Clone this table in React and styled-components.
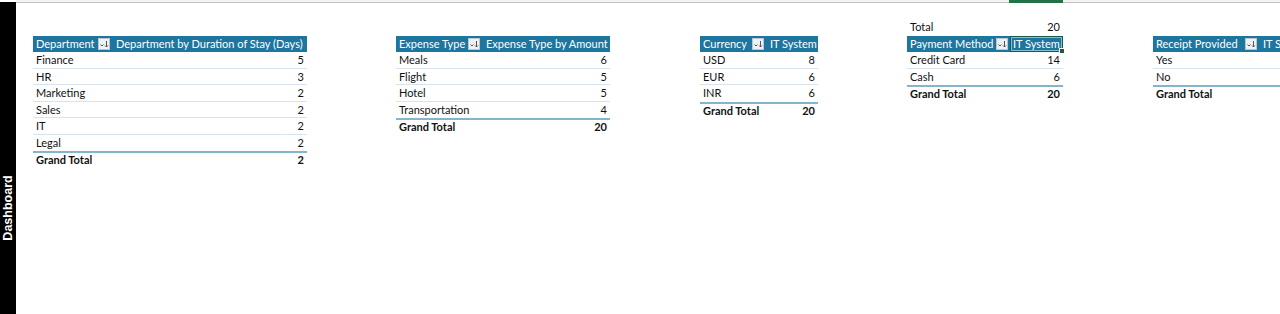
import React from "react";
import styled, { createGlobalStyle } from "styled-components";

const GlobalStyle = createGlobalStyle`
  html, body {
    margin: 0;
    padding: 0;
    background: #ffffff;
  }
  body {
    font-family: Lato, "Noto Sans", "Liberation Sans", sans-serif;
    color: #111;
  }
`;

const Page = styled.div`
  display: flex;
  height: 314px;
  overflow: hidden;
  background: #fff;
`;

const Sidebar = styled.div`
  width: 16px;
  flex: none;
  background: #000;
  margin-top: 2px;
  display: flex;
  align-items: center;
  justify-content: center;
  padding-top: 100px;
  box-sizing: border-box;
  span {
    transform: rotate(-90deg);
    color: #fff;
    font-family: "Liberation Sans", Arial, sans-serif;
    font-weight: 700;
    font-size: 12.5px;
    white-space: nowrap;
  }
`;

const Sheet = styled.div`
  flex: 1;
  display: flex;
  flex-direction: column;
  min-width: 0;
`;

const ColumnBar = styled.div`
  height: 2px;
  border-bottom: 1px solid #c4c4c4;
  background: #f3f3f3;
  position: relative;
  span {
    position: absolute;
    left: 993px;
    width: 54px;
    top: 0;
    height: 3px;
    background: #217346;
  }
`;

const Canvas = styled.div`
  display: flex;
  align-items: flex-start;
  padding-top: 16px;
  padding-left: 17px;
  overflow: hidden;
`;

const Pivot = styled.div`
  flex: none;
  margin-left: ${(p) => p.$gap || 0}px;
  display: grid;
  grid-template-columns: ${(p) => p.$cols};
  font-size: 11px;
  padding-top: ${(p) => (p.$pre ? 0 : 16.5)}px;
`;

const Cell = styled.div`
  height: 16.5px;
  line-height: 16.5px;
  padding: 0 3px;
  white-space: nowrap;
  overflow: hidden;
  box-sizing: border-box;
  text-align: ${(p) => (p.$num ? "right" : "left")};
  border-bottom: 1px solid ${(p) => (p.$last ? "transparent" : "#d7e4ed")};
`;

const PreCell = styled(Cell)`
  border-bottom: none;
`;

const HeadCell = styled.div`
  height: 16px;
  line-height: 16px;
  background: #1d76a0;
  color: #fff;
  padding: 0 3px;
  white-space: nowrap;
  overflow: hidden;
  box-sizing: border-box;
  display: flex;
  align-items: center;
  justify-content: ${(p) => (p.$filter ? "space-between" : "flex-start")};
  margin-bottom: 0.5px;
  position: relative;
  ${(p) =>
    p.$selected &&
    `
    overflow: visible;
    box-shadow: inset 0 0 0 1px #1a5848, inset 0 0 0 2px #7fc3cf;
    &::after {
      content: "";
      position: absolute;
      right: -2px;
      bottom: -2px;
      width: 4px;
      height: 4px;
      background: #1a5848;
      border: 1px solid #fff;
    }
  `}
`;

const TotalCell = styled(Cell)`
  font-weight: 700;
  border-bottom: none;
  border-top: 2px solid #86b4ca;
  line-height: 14.5px;
`;

const FilterBtn = styled.span`
  width: 12px;
  height: 12px;
  flex: none;
  background: #eef2f5;
  border: 1px solid #b9c6cf;
  box-sizing: border-box;
  display: flex;
  align-items: center;
  justify-content: center;
  margin-left: 3px;
`;

const FilterIcon = () => (
  <FilterBtn>
    <svg width="10" height="10" viewBox="0 0 10 10">
      <path d="M1.5 5.5 L3 7 L4.5 5.5" fill="none" stroke="#555" strokeWidth="1" />
      <path d="M7.5 2 V8" stroke="#555" strokeWidth="1" />
      <path d="M6 6.5 L7.5 8 L9 6.5" fill="none" stroke="#555" strokeWidth="1" />
    </svg>
  </FilterBtn>
);

const tables = [
  {
    gap: 0,
    cols: "80px 194px",
    head: ["Department", "Department by Duration of Stay (Days)"],
    rows: [
      ["Finance", 5],
      ["HR", 3],
      ["Marketing", 2],
      ["Sales", 2],
      ["IT", 2],
      ["Legal", 2],
    ],
    total: 2,
  },
  {
    gap: 89,
    cols: "87px 127px",
    head: ["Expense Type", "Expense Type by Amount"],
    rows: [
      ["Meals", 6],
      ["Flight", 5],
      ["Hotel", 5],
      ["Transportation", 4],
    ],
    total: 20,
  },
  {
    gap: 90,
    cols: "67px 51px",
    head: ["Currency", "IT System"],
    rows: [
      ["USD", 8],
      ["EUR", 6],
      ["INR", 6],
    ],
    total: 20,
  },
  {
    gap: 89,
    cols: "103px 53px",
    pre: ["Total", 20],
    selected: true,
    head: ["Payment Method", "IT System"],
    rows: [
      ["Credit Card", 14],
      ["Cash", 6],
    ],
    total: 20,
  },
  {
    gap: 90,
    cols: "107px 60px",
    head: ["Receipt Provided", "IT System"],
    rows: [
      ["Yes", ""],
      ["No", ""],
    ],
    total: "",
  },
];

export default function App() {
  return (
    <>
      <GlobalStyle />
      <Page>
        <Sidebar>
          <span>Dashboard</span>
        </Sidebar>
        <Sheet>
          <ColumnBar>
            <span />
          </ColumnBar>
          <Canvas>
            {tables.map((t, i) => (
              <Pivot key={i} $gap={t.gap} $cols={t.cols} $pre={!!t.pre}>
                {t.pre && (
                  <>
                    <PreCell>{t.pre[0]}</PreCell>
                    <PreCell $num>{t.pre[1]}</PreCell>
                  </>
                )}
                <HeadCell $filter>
                  {t.head[0]}
                  <FilterIcon />
                </HeadCell>
                <HeadCell $selected={t.selected}>{t.head[1]}</HeadCell>
                {t.rows.map((r, j) => (
                  <React.Fragment key={j}>
                    <Cell $last={j === t.rows.length - 1}>{r[0]}</Cell>
                    <Cell $num $last={j === t.rows.length - 1}>{r[1]}</Cell>
                  </React.Fragment>
                ))}
                <TotalCell>Grand Total</TotalCell>
                <TotalCell $num>{t.total}</TotalCell>
              </Pivot>
            ))}
          </Canvas>
        </Sheet>
      </Page>
    </>
  );
}
